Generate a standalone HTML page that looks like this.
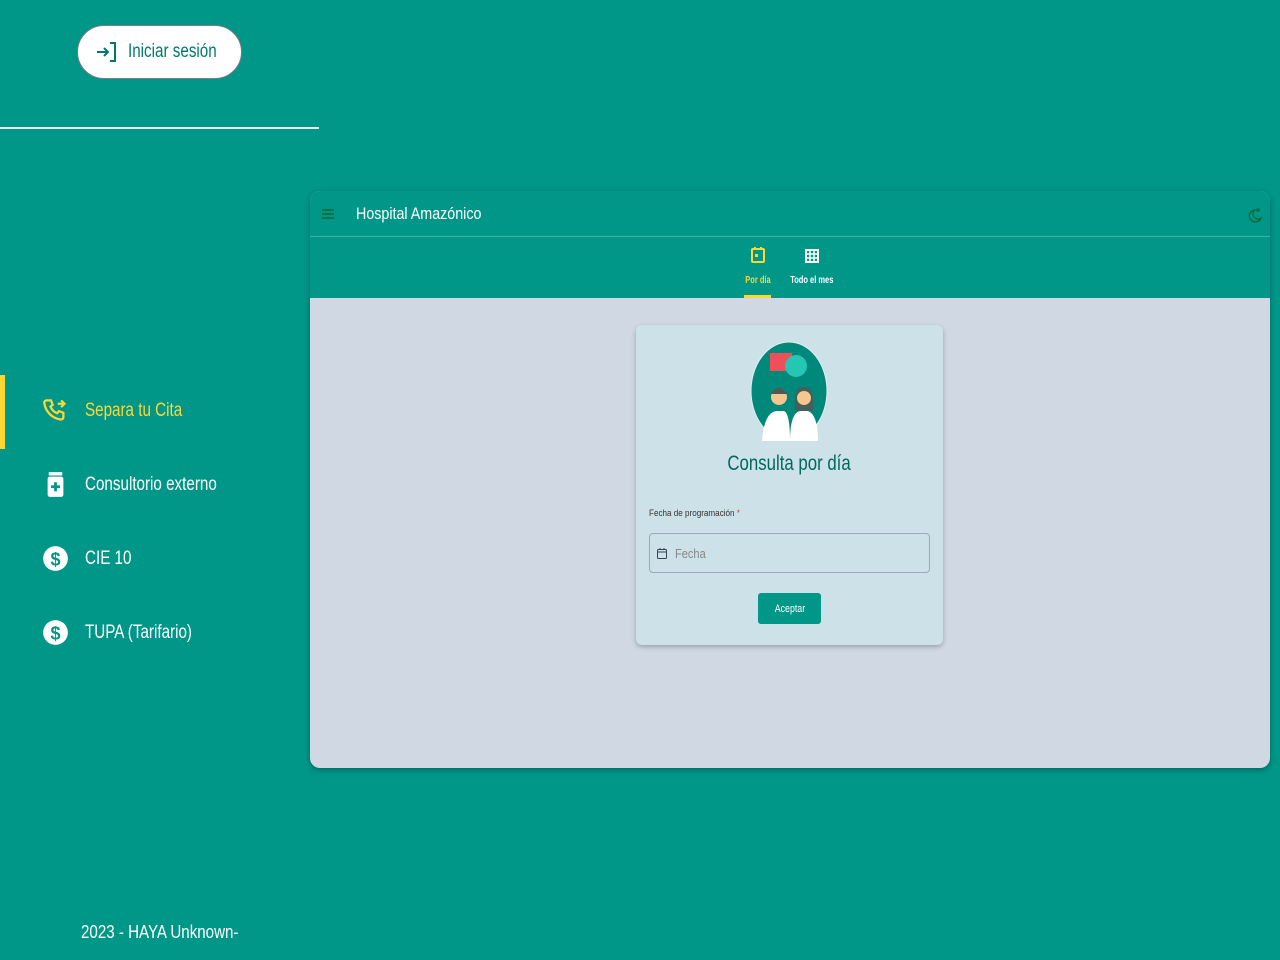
<!DOCTYPE html>
<html><head><meta charset="utf-8"><style>
*{margin:0;padding:0;box-sizing:border-box}
body{width:1280px;height:960px;background:#009688;font-family:"Liberation Sans",sans-serif;position:relative;overflow:hidden;color:#fff}
.abs{position:absolute}
.n{display:inline-block;transform:scaleX(.8);transform-origin:left center;white-space:nowrap}
.c{display:inline-block;transform:scaleX(.8);transform-origin:center;white-space:nowrap}
.btn{left:77px;top:25px;width:165px;height:54px;background:#fff;border:1px solid #7a7a8a;border-radius:27px;color:#00796b;font-size:19px;display:flex;align-items:center;padding-left:17px;gap:9px}
.hr{left:0;top:127px;width:319px;height:2px;background:#e8f0ee}
.item{left:42px;display:flex;align-items:center;gap:16px;font-size:19px}
.card{left:310px;top:191px;width:960px;height:577px;border-radius:10px;overflow:hidden;background:#cfd8e3;box-shadow:0 2px 6px rgba(0,0,0,.3)}
.top{height:107px;background:#009688}
.bar{height:46px;border-bottom:1px solid #3fb0a3;display:flex;align-items:center;padding-left:12px;font-size:17px}
.form{left:326px;top:134px;width:307px;height:320px;background:#cce1e8;border-radius:6px;box-shadow:0 2px 5px rgba(0,0,0,.25)}
</style></head><body>
<div class="abs btn"><svg width="24" height="24" viewBox="0 0 24 24" fill="none" stroke="#00796b" stroke-width="2"><path d="M2 12h11M9 8l4 4-4 4M15 3h5v18h-5"/></svg><span class="n">Iniciar sesión</span></div>
<div class="abs hr"></div>
<div class="abs" style="left:0;top:375px;width:5px;height:74px;background:#fdd835"></div>
<div class="abs item" style="top:397px;color:#fdd835"><svg width="27" height="27" viewBox="0 0 24 24" fill="none" stroke="#fdd835" stroke-width="2"><path d="M4 3h4l1.5 4-2 1.5a11 11 0 0 0 6 6l1.5-2 4 1.5v4a2 2 0 0 1-2 2A17 17 0 0 1 2 5a2 2 0 0 1 2-2z"/><path d="M14 6h5M17 3l3 3-3 3" /></svg><span class="n">Separa tu Cita</span></div>
<div class="abs item" style="top:471px"><svg width="27" height="27" viewBox="0 0 24 24"><rect x="6" y="1" width="12" height="3" fill="#fff"/><rect x="5" y="5" width="14" height="18" rx="2" fill="#fff"/><path d="M12 10v8M8 14h8" stroke="#009688" stroke-width="2.5"/></svg><span class="n">Consultorio externo</span></div>
<div class="abs item" style="top:545px"><svg width="27" height="27" viewBox="0 0 24 24"><circle cx="12" cy="12" r="11" fill="#fff"/><text x="12" y="18" font-size="16" font-weight="bold" text-anchor="middle" fill="#009688" font-family="Liberation Sans">$</text></svg><span class="n">CIE 10</span></div>
<div class="abs item" style="top:619px"><svg width="27" height="27" viewBox="0 0 24 24"><circle cx="12" cy="12" r="11" fill="#fff"/><text x="12" y="18" font-size="16" font-weight="bold" text-anchor="middle" fill="#009688" font-family="Liberation Sans">$</text></svg><span class="n">TUPA (Tarifario)</span></div>
<div class="abs" style="left:81px;top:922px;font-size:18px"><span class="n" style="transform:scaleX(.84)">2023 - HAYA Unknown-</span></div>
<div class="abs card">
 <div class="top">
  <div class="bar"><svg width="12" height="10" viewBox="0 0 12 10"><path d="M0 1h12M0 5h12M0 9h12" stroke="#063" stroke-width="1.5"/></svg><span style="margin-left:22px;transform:scaleX(.84)" class="n" >Hospital Amazónico</span>
   <svg class="abs" style="left:938px;top:16px" width="14" height="16" viewBox="0 0 14 16" fill="none" stroke="#063" stroke-width="1.3"><path d="M7 3a6 6 0 1 0 6 8A5 5 0 0 1 7 3z"/><path d="M10 1v4M8 3h4"/></svg></div>
  <div class="abs" style="left:425px;top:56px;width:46px;text-align:center;color:#fdd835;font-size:10px;font-weight:bold"><svg width="14" height="16" viewBox="0 0 14 16"><rect x="1" y="2" width="12" height="13" rx="1" fill="none" stroke="#fdd835" stroke-width="2"/><rect x="4" y="7" width="3" height="3" fill="#fdd835"/><path d="M4 0v3M10 0v3" stroke="#fdd835" stroke-width="2"/></svg><div style="margin-top:9px"><span class="c" style="transform:scaleX(.75)">Por día</span></div></div>
  <div class="abs" style="left:434px;top:104px;width:27px;height:3px;background:#fdd835"></div>
  <div class="abs" style="left:472px;top:58px;width:60px;text-align:center;font-size:10px;font-weight:bold"><svg width="14" height="14" viewBox="0 0 14 14"><rect x="1" y="1" width="12" height="12" fill="none" stroke="#fff" stroke-width="2"/><path d="M5 1v12M9 1v12M1 5h12M1 9h12" stroke="#fff" stroke-width="1.5"/></svg><div style="margin-top:9px"><span class="c" style="transform:scaleX(.75)">Todo el mes</span></div></div>
 </div>
 <div class="abs form">
  <svg class="abs" style="left:114px;top:16px" width="78" height="100" viewBox="0 0 78 100"><ellipse cx="39" cy="50" rx="38" ry="49" fill="#00897b" stroke="#e0f0f0" stroke-width="1"/><rect x="20" y="12" width="22" height="18" fill="#ef4f5a"/><circle cx="46" cy="25" r="11" fill="#26c6b5"/><path d="M12 100 Q14 72 26 70 L34 70 Q40 72 40 100z" fill="#fff"/><path d="M40 100 Q40 72 50 70 L58 70 Q68 74 68 100z" fill="#fff"/><circle cx="29" cy="56" r="8" fill="#f7c58e"/><path d="M21 53 q8 -12 16 0" fill="#555"/><path d="M45 70 q-2 -26 9 -24 q11 -2 9 24z" fill="#555" opacity=".8"/><circle cx="54" cy="57" r="7" fill="#f7c58e"/></svg>
  <div class="abs" style="left:0;top:127px;width:307px;text-align:center;color:#00695c;font-size:21px"><span class="c">Consulta por día</span></div>
  <div class="abs" style="left:13px;top:183px;font-size:9px;color:#333"><span class="n" style="transform:scaleX(.9)">Fecha de programación <span style="color:#e53935">*</span></span></div>
  <div class="abs" style="left:13px;top:208px;width:281px;height:40px;border:1.5px solid #9ab;border-radius:4px;display:flex;align-items:center;padding-left:7px;gap:8px;color:#888;font-size:13px"><svg width="10" height="11" viewBox="0 0 10 11"><rect x=".5" y="1.5" width="9" height="9" rx="1" fill="none" stroke="#345" stroke-width="1"/><path d="M.5 4h9M3 0v2M7 0v2" stroke="#345"/></svg><span class="n" style="transform:scaleX(.85)">Fecha</span></div>
  <div class="abs" style="left:122px;top:268px;width:63px;height:31px;background:#009688;border-radius:3px;font-size:11px;display:flex;align-items:center;justify-content:center"><span class="c">Aceptar</span></div>
 </div>
</div>
</body></html>
